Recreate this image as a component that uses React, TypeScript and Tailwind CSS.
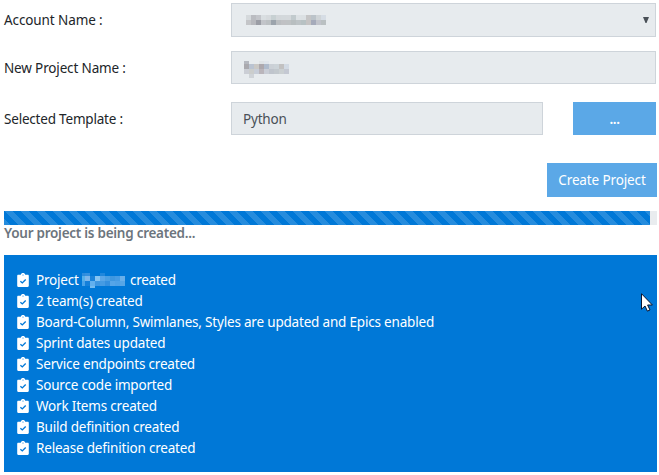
import React from "react";

const labelFont = "font-['Noto_Sans','Open_Sans',sans-serif]";

const accountMosaic = [
  ["#d5d9dc", "#babcc1", "#c3c5ca", "#d9dee1", "#d6dadd", "#c7d0d2", "#d3d7da", "#d3d8db", "#d4d8db", "#c1cacd", "#dce1e4", "#dbe0e3", "#c5c5c6", "#bbc3c9", "#cfd4d7", "#d6dde5"],
  ["#c4c5c8", "#b7b8bd", "#9b9da5", "#c2c4c9", "#bcc0c3", "#9ca4ac", "#bbbec1", "#c0c1c4", "#bfc2c4", "#b8bec0", "#bdc3c6", "#b7c1c3", "#c5c3c3", "#a5aaba", "#c1c3cb", "#bac0c2"],
];
const projectMosaic = [
  ["#b5b8bf", "#e7ebee", "#e7ebee", "#dfe3e6", "#e0e5eb", "#e7ebee", "#e7ebee", "#e7ebee", "#e7ebee"],
  ["#aaa9ae", "#bac3d1", "#cac8c5", "#ada8ad", "#afbbcc", "#cbd0d6", "#ccd3d8", "#c2c1c1", "#d2dae4"],
  ["#cbced5", "#cbcdcc", "#c7cdd8", "#bab5bb", "#c9cdd6", "#bfc4cc", "#c2c8cd", "#cacfd1", "#c4c8d2"],
  ["#e7ebee", "#cfd3d8", "#e7ebee", "#e7ebee", "#e7ebee", "#e7ebee", "#e7ebee", "#e7ebee", "#e7ebee"],
];
const createdMosaic = [
  ["#2d8cdd", "#3390df", "#0078d7", "#0078d7", "#2087dc", "#0078d7", "#0078d7", "#0078d7", "#0078d7"],
  ["#55b0ea", "#7db6ea", "#1a83da", "#86c4f2", "#5aa6e8", "#4b9fe3", "#3e97e0", "#459be4", "#68afea"],
  ["#49a3e9", "#1480da", "#62b0ee", "#3f97e1", "#459be3", "#3590df", "#55a5e8", "#4fa2e7", "#57a6e6"],
  ["#0078d7", "#0078d7", "#74bbf0", "#0078d7", "#0078d7", "#0078d7", "#0078d7", "#0078d7", "#0078d7"],
];

function Mosaic({ rows, heights, first = 5 }: { rows: string[][]; heights: number[]; first?: number }) {
  return (
    <div className="flex shrink-0 flex-col">
      {rows.map((row, r) => (
        <div key={r} className="flex" style={{ height: heights[r] }}>
          {row.map((c, i) => (
            <span key={i} className="h-full" style={{ backgroundColor: c, width: i === 0 ? first : 5 }} />
          ))}
        </div>
      ))}
    </div>
  );
}

function ClipboardCheck() {
  return (
    <svg className="mr-[7px] h-[14px] w-[12px] shrink-0" viewBox="0 0 12 14">
      <path
        fill="#fff"
        d="M1.300 1.800H3.800C4 .6 4.800 0 6 0S8 .6 8.200 1.800h2.500c.7 0 1.100.5 1.100 1.100v9.900c0 .7-.5 1.100-1.100 1.100H1.300c-.7 0-1.100-.4-1.100-1.100V2.900C.2 2.300.6 1.800 1.300 1.800Z"
      />
      <circle cx="6" cy="2" r=".6" fill="#0078d7" />
      <path d="M3.400 8.200 5.300 9.900 8.700 6.600" fill="none" stroke="#0078d7" strokeWidth="1.400" />
    </svg>
  );
}

const steps = [
  "2 team(s) created",
  "Board-Column, Swimlanes, Styles are updated and Epics enabled",
  "Sprint dates updated",
  "Service endpoints created",
  "Source code imported",
  "Work Items created",
  "Build definition created",
  "Release definition created",
];

export default function App() {
  return (
    <div className={`relative h-[475px] w-[659px] overflow-hidden bg-white pl-1 pt-[3px] text-[13.5px] leading-[21px] text-[#212529] ${labelFont}`}>
      <div className="flex h-[34px] items-center">
        <label className="w-[227px] tracking-[-0.1px]">Account Name :</label>
        <div className="flex h-[34px] w-[425px] justify-between border border-[#ced4da] bg-[#e7ebee] pl-[14px]">
          <div className="pt-[11px]"><Mosaic rows={accountMosaic} heights={[5, 5]} /></div>
          <svg className="mr-[6px] mt-[13px] h-[6px] w-[6px]" viewBox="0 0 6 6"><path d="M0 0h6L3.500 6h-1Z" fill="#495057" /></svg>
        </div>
      </div>
      <div className="mt-[14px] flex h-[33px] items-center">
        <label className="w-[227px] pt-[2px] tracking-[-0.15px]">New Project Name :</label>
        <div className="h-[33px] w-[425px] border border-[#ced4da] bg-[#e7ebee] pl-3 pt-[9px]">
          <Mosaic rows={projectMosaic} heights={[3, 5, 5, 4]} />
        </div>
      </div>
      <div className="mt-[18px] flex h-[33px] items-center">
        <label className="w-[227px] pt-[2px] tracking-[-0.2px]">Selected Template :</label>
        <div className="flex h-[33px] w-[312px] items-center border border-[#ced4da] bg-[#e7ebee] pl-[11px] pt-[2px] tracking-[-0.2px] text-[#495057]">Python</div>
        <button className="ml-[30px] h-[33px] w-[83px] bg-[#5ba8e7] pt-[2px] font-semibold tracking-[-0.4px] text-white">...</button>
      </div>
      <div className="mt-7 flex h-[34px] justify-end pr-[2px]">
        <button className="h-[34px] w-[110px] whitespace-nowrap bg-[#5ba8e7] tracking-[-0.12px] text-white">Create Project</button>
      </div>
      <div className="mt-[14px] h-[14px] w-[653px] bg-[#e9ecef]">
        <div className="h-[14px] w-[646px] bg-[#0078d7] bg-[linear-gradient(45deg,rgba(255,255,255,0.15)_25%,transparent_25%,transparent_50%,rgba(255,255,255,0.15)_50%,rgba(255,255,255,0.15)_75%,transparent_75%,transparent)] bg-[length:16px_16px]" />
      </div>
      <p className="mt-[-2px] h-[21px] font-semibold tracking-[-0.26px] text-[#6c757d]">Your project is being created...</p>
      <div className="mt-[11px] h-[217px] w-[653px] bg-[#0078d7] pl-[13px] pt-[14px] text-white">
        <div className="flex h-[21px] items-center">
          <ClipboardCheck />
          <span className="w-[46px] pt-[2px] tracking-[-0.19px]">Project</span>
          <div className="pt-px"><Mosaic rows={createdMosaic} heights={[3, 5, 5, 2]} first={3} /></div>
          <span className="ml-[5px] pt-[2px] tracking-[-0.3px]">created</span>
        </div>
        {steps.map((text) => (
          <div key={text} className="flex h-[21px] items-center whitespace-nowrap">
            <ClipboardCheck />
            <span className="pt-[2px] tracking-[-0.19px]">{text}</span>
          </div>
        ))}
      </div>
      <svg className="absolute left-[641px] top-[293px] h-[19px] w-[12px]" viewBox="0 0 12 19">
        <path d="M.5.700v15.500L4 13l2.400 5.100 2.600-1.100-2.400-5h4.800Z" fill="#fff" stroke="#0a1630" />
      </svg>
    </div>
  );
}
